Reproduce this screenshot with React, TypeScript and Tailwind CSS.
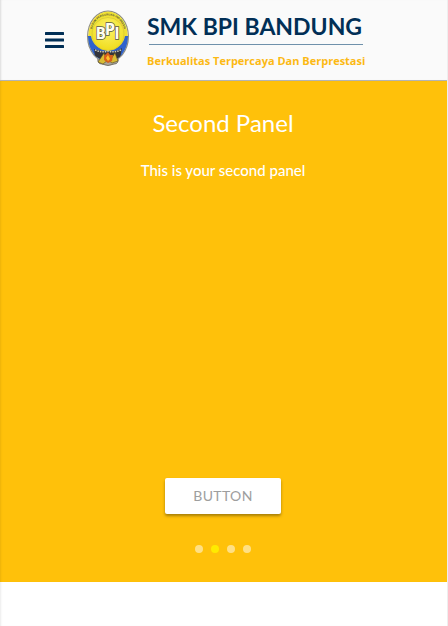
import { useState } from "react";

function Emblem() {
  return (
    <svg viewBox="0 0 44 56" className="h-14 w-11 shrink-0" role="img" aria-label="BPI">
      <defs>
        <radialGradient id="gold" cx="50%" cy="35%" r="65%">
          <stop offset="0" stopColor="#fbf36a" />
          <stop offset="1" stopColor="#f0dc1c" />
        </radialGradient>
        <clipPath id="shield">
          <ellipse cx="22" cy="26.500" rx="20" ry="25" />
        </clipPath>
        <path id="motto" d="M5.500 27 C5 12 13 5.500 22 5.500 S39 12 38.500 27" />
      </defs>
      <path d="M12 48 Q11 54 16 54 Q22 57 28 54 Q33 54 32 48Z" fill="#aaa79c" stroke="#77736b" />
      <ellipse cx="22" cy="26.500" rx="21" ry="26" fill="#8b8b80" />
      <ellipse cx="22" cy="26.500" rx="20" ry="25" fill="#eee0a0" />
      <g clipPath="url(#shield)">
        <ellipse cx="22" cy="26" rx="19.500" ry="24.500" fill="#f0e132" />
        <path d="M2 26 L5 26 Q7 38 22 41 Q37 38 39 26 L42 26 V53 H2Z" fill="#2f62cc" />
        <path d="M8 39 Q17 42 22 41 Q31 42 36 38 L34 49 L22 53 L9 46Z" fill="#33343a" />
      </g>
      <ellipse cx="22" cy="24" rx="16" ry="16.500" fill="url(#gold)" stroke="#c9b83a" strokeWidth=".5" />
      <text fill="#5a5838" fontSize="2.800" fontWeight="700" fontFamily="Liberation Sans, sans-serif">
        <textPath href="#motto" startOffset="50%" textAnchor="middle">BADAN PERGURUAN INDONESIA</textPath>
      </text>
      <g fill="#fffef0" stroke="#55554c" strokeWidth="1.400" paintOrder="stroke" fontFamily="Liberation Sans Narrow, DejaVu Sans Condensed, sans-serif" fontSize="15" fontWeight="700" textAnchor="middle">
        <text x="15" y="29">B</text>
        <text x="24" y="25">P</text>
        <text x="31" y="29">I</text>
      </g>
      <path d="M9 40 Q16 43 22 41 Q29 43 35 40" fill="none" stroke="#c9c9bb" strokeWidth="1.500" strokeDasharray="1.500 1" />
      <path d="M12 52 L18 43 L20 49 L22 45 L25 49 L29 43 L32 51 L26 53 L22 50 L17 54Z" fill="#d8bd35" stroke="#5d4b20" strokeWidth=".6" />
      <path d="M22 42 L24 45 L27 45 L26 51 L22 53 L18 50 L18 46Z" fill="#d8601c" />
      <path d="M22 45 L24 49 L22 51 L20 48Z" fill="#ffc12b" />
    </svg>
  );
}

export default function App() {
  const [active, setActive] = useState(1);
  return (
    <div className="min-h-screen border-r border-[#eeeeee] bg-white font-['Lato',sans-serif] shadow-[inset_2px_0_2px_-1px_rgba(0,0,0,0.08)]">
      <header className="flex h-[81px] items-center border-b border-[#b4b4b4] bg-[#fafafa] pl-11 shadow-[inset_2px_0_2px_-1px_rgba(0,0,0,0.12)]">
        <button type="button" aria-label="Menu" className="mr-5 h-6 w-[22px] shrink-0 pl-px text-[#012f56]">
          <svg viewBox="0 0 19 16" className="h-4 w-[19px]" fill="currentColor" aria-hidden="true">
            <rect width="19" height="3" rx=".5" />
            <rect y="6.500" width="19" height="3" rx=".5" />
            <rect y="13" width="19" height="3" rx=".5" />
          </svg>
        </button>
        <div className="pb-1">
          <Emblem />
        </div>
        <div className="ml-4 flex flex-col pb-0.5 pl-px whitespace-nowrap">
          <h1 className="text-[23px] leading-8 font-bold text-[#012f56]">SMK BPI BANDUNG</h1>
          <div className="mx-0.5 mt-0.5 h-px bg-[#6f91ab]" />
          <p className="mt-2 font-['Open_Sans',sans-serif] text-[11px] leading-4 font-bold text-[#fcb913]">
            Berkualitas Terpercaya Dan Berprestasi
          </p>
        </div>
      </header>
      <main className="flex h-[501px] flex-col items-center bg-[#ffc10a] pr-px text-white shadow-[inset_2px_0_2px_-1px_rgba(0,0,0,0.08)]">
        <h2 className="mt-[26px] text-2xl leading-8">Second Panel</h2>
        <p className="mt-[19px] text-[15px] leading-6 font-medium">This is your second panel</p>
        <div className="mt-auto flex flex-col items-center pb-[29px]">
          <button type="button" className="h-9 rounded-xs bg-white px-7 text-sm tracking-wide text-[#9e9e9e] shadow-[0_2px_3px_rgba(0,0,0,0.35)]">
            BUTTON
          </button>
          <div className="mt-[31px] flex gap-2">
            {[0, 1, 2, 3].map((i) => (
              <button
                key={i}
                type="button"
                aria-label={`Panel ${i + 1}`}
                onClick={() => setActive(i)}
                className={`size-2 rounded-full ${i === active ? "bg-[#ffea00]" : "bg-white/50"}`}
              />
            ))}
          </div>
        </div>
      </main>
    </div>
  );
}
